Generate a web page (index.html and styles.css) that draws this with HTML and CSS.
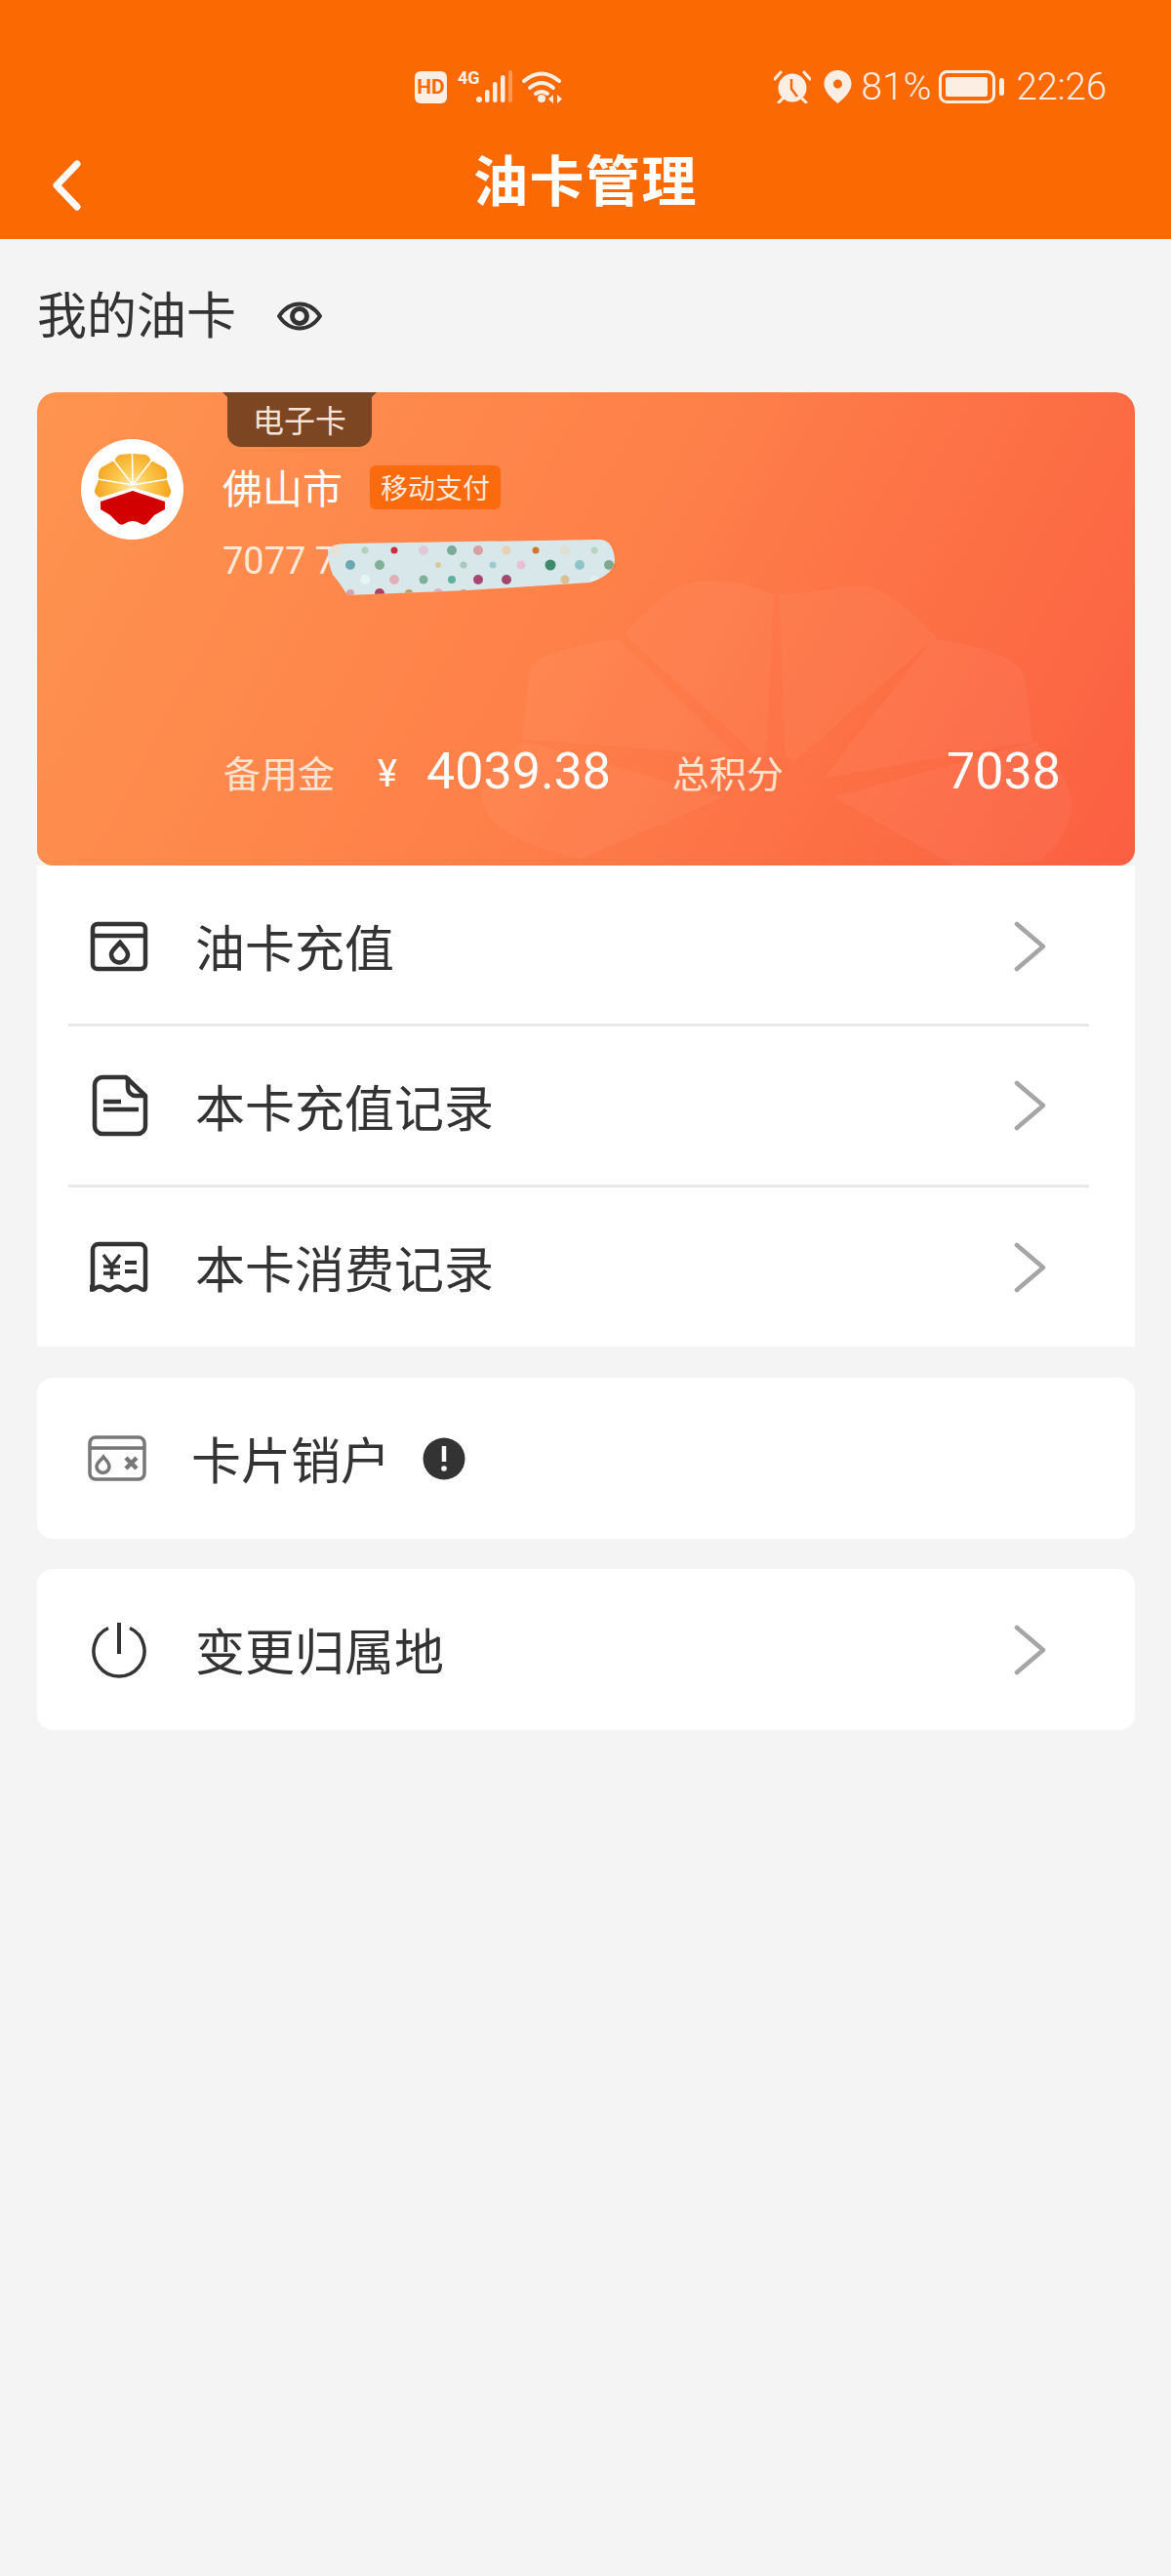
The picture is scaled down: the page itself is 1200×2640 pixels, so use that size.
FILE: index.html
```html
<!DOCTYPE html>
<html lang="zh-CN">
<head>
  <meta charset="UTF-8">
  <meta name="viewport" content="width=device-width, initial-scale=1.0">
  <title>油卡管理</title>
  <link rel="stylesheet" href="styles.css">
</head>
<body>
  <!-- 顶部 -->
  <header class="header">
    <div class="status-bar">
      <svg class="st-left" width="154" height="40" viewBox="0 -3 154 40">
        <rect x="0" y="1" width="33" height="33" rx="6" fill="#fdeee3"/>
        <text x="16.5" y="24" class="st-hd">HD</text>
        <text x="44" y="14" class="st-4g">4G</text>
        <g fill="#fdeee3">
          <circle cx="66" cy="30" r="3"/>
          <rect x="72" y="20" width="4.500" height="13" rx="2.200"/>
          <rect x="80" y="12" width="4.500" height="21" rx="2.200"/>
          <rect x="88" y="5" width="4.500" height="28" rx="2.200"/>
          <rect x="96" y="0" width="4" height="33" rx="2" opacity="0.35"/>
          <circle cx="130" cy="29" r="4"/>
          <path d="M142 25v9l-5-4.500zM146 25v9l5-4.500z"/>
        </g>
        <g fill="none" stroke="#fdeee3" stroke-width="4" stroke-linecap="round">
          <path d="M112 11q18-15 36 0"/>
          <path d="M118 18q12-10 24 0"/>
          <path d="M124 24q6-4 12 0"/>
        </g>
      </svg>
      <div class="st-right">
        <svg width="38" height="34" viewBox="0 0 38 34">
          <circle cx="19" cy="18" r="14.500" fill="#fdeee3"/>
          <path d="M18 9v10l6 8" fill="none" stroke="#fb6903" stroke-width="2.500"/>
          <path d="M1 9l6-7M37 9l-6-7M5 33l4-4M33 33l-4-4" stroke="#fdeee3" stroke-width="3" stroke-linecap="round"/>
        </svg>
        <svg class="st-pin" width="29" height="34" viewBox="0 0 29 34">
          <path fill-rule="evenodd" d="M14.5 0C6.5 0 .5 6 .5 14c0 8 8 15 14 20 6-5 14-12 14-20C28.500 6 22.500 0 14.500 0zm0 9.500a4.500 4.500 0 1 1 0 9 4.500 4.500 0 0 1 0-9z" fill="#fdeee3"/>
        </svg>
        <span class="st-text st-pct">81%</span>
        <svg class="st-batt" width="68" height="34" viewBox="0 0 68 34">
          <rect x="1.500" y="1.500" width="55" height="31" rx="7" fill="none" stroke="#fdeee3" stroke-width="3"/>
          <rect x="7" y="7" width="43" height="20" rx="2" fill="#fdeee3"/>
          <rect x="62" y="8" width="5" height="18" rx="2.500" fill="#fdeee3"/>
        </svg>
        <span class="st-text st-time">22:26</span>
      </div>
    </div>
    <div class="nav">
      <svg class="back" width="34" height="54" viewBox="0 0 34 54">
        <path d="M29 5L8 27l21 22" fill="none" stroke="#fff" stroke-width="7" stroke-linecap="round" stroke-linejoin="round"/>
      </svg>
      <h1 class="nav-title">油卡管理</h1>
    </div>
  </header>

  <!-- 我的油卡 -->
  <div class="section-head">
    <span class="section-title">我的油卡</span>
    <svg width="46" height="30" viewBox="0 0 46 30">
      <path d="M2 15C8 6 15 2.500 23 2.500S38 6 44 15C38 24 31 27.500 23 27.500S8 24 2 15z" fill="none" stroke="#333" stroke-width="4"/>
      <circle cx="23" cy="15" r="7.500" fill="none" stroke="#333" stroke-width="5"/>
    </svg>
  </div>

  <main class="content">
    <div class="oil-card">
      <!-- 水印 -->
      <svg class="watermark" width="1125" height="485" viewBox="38 402 1125 485">
        <g fill="#fff" opacity="0.04">
          <path d="M793 610Q750 590 710 597 680 605 640 650L774 773 785 775z"/>
          <path d="M798 610Q840 605 889 600 920 610 959 653L815 780 805 775z"/>
          <path d="M634 655Q590 660 557 673 540 680 541 700L535 757 755 775z"/>
          <path d="M956 655Q1000 660 1029 673 1050 685 1051 700L1058 760 844 797z"/>
          <path d="M493 817Q495 790 538 760L742 817 595 880Q500 860 493 817z"/>
          <path d="M854 817L1061 760Q1095 790 1099 827 1090 870 1061 883L978 887z"/>
        </g>
      </svg>
      <div class="card-tag">
        <span>电子卡</span>
      </div>

      <div class="card-top">
        <div class="logo">
          <svg width="105" height="103" viewBox="0 0 105 103">
            <defs>
              <radialGradient id="petal" gradientUnits="userSpaceOnUse" cx="53" cy="48" r="40">
                <stop offset="0" stop-color="#fdeab0"/>
                <stop offset="0.4" stop-color="#fdcb55"/>
                <stop offset="1" stop-color="#f5a31c"/>
              </radialGradient>
            </defs>
            <path d="M52 50L19 60Q13 56 14 52L18 42Q17 32 21 29L32 23 34 23Q36 17 40 16L51 15 54 15 66 16Q70 17 72 23L74 23 85 29Q89 32 88 42L92 52Q93 56 89 60L54 50z" fill="url(#petal)"/>
            <path d="M53 47L52.500 14M53 47L33 21M53 47L73 21M53 47L17 41M53 47L89 41" stroke="#fff" stroke-width="1.600"/>
            <path d="M53 53L20 64V72L30 78 37 85Q40 89 44 87 53 81 62 87 66 89 69 85L75 78 86 72V64z" fill="#d20000"/>
          </svg>
        </div>
        <div class="card-info">
          <div class="card-city">
            <span class="city-name">佛山市</span>
            <span class="pay-tag">移动支付</span>
          </div>
          <div class="card-no">7077 7</div>
        </div>
      </div>

      <!-- 卡号打码 -->
      <svg class="scribble" width="294" height="58" viewBox="0 0 294 58">
        <defs>
          <clipPath id="blob">
            <path d="M0 10Q5 4 20 4L278 0Q292 0 294 20 294 36 268 44L143 52 20 57Q12 44 5 36 0 24 0 10z"/>
          </clipPath>
        </defs>
        <g clip-path="url(#blob)">
          <rect width="294" height="58" fill="#d8e8ea"/>
          <circle cx="8" cy="11" r="5" fill="#e8e0d0"/>
          <circle cx="38" cy="11" r="3.500" fill="#b4d0bc"/>
          <circle cx="68" cy="11" r="3.500" fill="#c93040"/>
          <circle cx="98" cy="11" r="5" fill="#e0c8d4"/>
          <circle cx="127" cy="11" r="5" fill="#7aab98"/>
          <circle cx="154" cy="11" r="5" fill="#d8a0a0"/>
          <circle cx="183" cy="11" r="4.500" fill="#e8d0b0"/>
          <circle cx="213" cy="11" r="3.500" fill="#d07830"/>
          <circle cx="243" cy="11" r="5" fill="#e0e0d0"/>
          <circle cx="273" cy="11" r="3.500" fill="#b8d4c0"/>
          <circle cx="23" cy="26" r="5" fill="#6ca8b0"/>
          <circle cx="53" cy="26" r="5" fill="#80b098"/>
          <circle cx="83" cy="26" r="4" fill="#d8e8e4"/>
          <circle cx="113" cy="26" r="3" fill="#d8c8a0"/>
          <circle cx="139" cy="26" r="3.500" fill="#a8c8b8"/>
          <circle cx="169" cy="26" r="3.500" fill="#a0c8d0"/>
          <circle cx="198" cy="26" r="4.500" fill="#e8c0d0"/>
          <circle cx="228" cy="26" r="5.500" fill="#3f8a6c"/>
          <circle cx="258" cy="26" r="5" fill="#90c4c8"/>
          <circle cx="288" cy="26" r="5" fill="#80a890"/>
          <circle cx="38" cy="41" r="5" fill="#e8f4f4"/>
          <circle cx="68" cy="41" r="5" fill="#e0b0b8"/>
          <circle cx="98" cy="41" r="4.500" fill="#80b098"/>
          <circle cx="127" cy="41" r="4" fill="#60b0a0"/>
          <circle cx="154" cy="41" r="5" fill="#a84870"/>
          <circle cx="183" cy="41" r="5" fill="#a04870"/>
          <circle cx="243" cy="41" r="4.500" fill="#d8c090"/>
          <circle cx="273" cy="41" r="4.500" fill="#e0f0f0"/>
          <circle cx="23" cy="55" r="4" fill="#d8a0a8"/>
          <circle cx="53" cy="55" r="5" fill="#b04060"/>
          <circle cx="83" cy="55" r="4" fill="#c0a060"/>
          <circle cx="113" cy="55" r="5" fill="#e0b0c0"/>
          <circle cx="139" cy="55" r="4" fill="#c0a870"/>
        </g>
      </svg>

      <div class="card-stats">
        <span class="stat-label">备用金</span>
        <span class="stat-yen">¥</span>
        <span class="stat-value">4039.38</span>
        <span class="stat-label stat-label-2">总积分</span>
        <span class="stat-value stat-points">7038</span>
      </div>
    </div>

    <!-- 菜单 -->
    <div class="menu-main">
      <div class="row row-line row-first">
        <svg class="row-icon" width="60" height="60" viewBox="0 0 60 60">
          <rect x="3" y="7" width="54" height="46" rx="5" fill="none" stroke="#333" stroke-width="4.500"/>
          <path d="M3 19h54" stroke="#333" stroke-width="4.500"/>
          <path d="M31 26c4 5 8 8 8 12a8.500 8.500 0 0 1-17 0c0-4 5-7 9-12z" fill="none" stroke="#333" stroke-width="4.500"/>
        </svg>
        <span class="row-text">油卡充值</span>
        <svg class="chev" width="36" height="56" viewBox="0 0 36 56">
          <path d="M6 5l27 23L6 51" fill="none" stroke="#a5a5a5" stroke-width="4.500" stroke-linecap="round" stroke-linejoin="round"/>
        </svg>
      </div>
      <div class="row row-line">
        <svg class="row-icon" width="60" height="64" viewBox="0 0 60 64">
          <path d="M37 3H13a8 8 0 0 0-8 8v42a8 8 0 0 0 8 8h36a8 8 0 0 0 8-8V22z" fill="none" stroke="#333" stroke-width="4.500" stroke-linejoin="round"/>
          <path d="M39 3v11a8 8 0 0 0 8 8h10" fill="none" stroke="#333" stroke-width="4.500"/>
          <path d="M14 28h18M14 36h36" stroke="#333" stroke-width="4.500"/>
        </svg>
        <span class="row-text">本卡充值记录</span>
        <svg class="chev" width="36" height="56" viewBox="0 0 36 56">
          <path d="M6 5l27 23L6 51" fill="none" stroke="#a5a5a5" stroke-width="4.500" stroke-linecap="round" stroke-linejoin="round"/>
        </svg>
      </div>
      <div class="row row-last">
        <svg class="row-icon" width="60" height="60" viewBox="0 0 60 60">
          <path d="M3 50V12a6 6 0 0 1 6-6h42a6 6 0 0 1 6 6v38c0 4-4 3-6 1-3-2-6-2-9 0-3 3-6 3-9 0-3-2-6-2-9 0-3 3-6 3-9 0-3-2-6-2-9 0-2 2-6 3-6-1z" fill="none" stroke="#333" stroke-width="4.500" stroke-linejoin="round"/>
          <path d="M14 17l8.500 11 8.500-11M22.500 28v14M14 29h17M14 36h17" fill="none" stroke="#333" stroke-width="3.500"/>
          <path d="M36 25h12M36 34h12" fill="none" stroke="#333" stroke-width="4"/>
        </svg>
        <span class="row-text">本卡消费记录</span>
        <svg class="chev" width="36" height="56" viewBox="0 0 36 56">
          <path d="M6 5l27 23L6 51" fill="none" stroke="#a5a5a5" stroke-width="4.500" stroke-linecap="round" stroke-linejoin="round"/>
        </svg>
      </div>
    </div>

    <div class="menu-box">
      <div class="row">
        <svg class="row-icon icon-cancel" width="60" height="48" viewBox="0 0 60 48">
          <rect x="2" y="2" width="56" height="43" rx="6" fill="none" stroke="#777" stroke-width="3.500"/>
          <path d="M2 13h56" stroke="#777" stroke-width="3.500"/>
          <path d="M16 22c3 4 6 6 6 10a6.500 6.500 0 0 1-13 0c0-4 4-6 7-10z" fill="none" stroke="#777" stroke-width="3.500"/>
          <path d="M39 23l11 11M50 23L39 34" stroke="#777" stroke-width="4.500"/>
        </svg>
        <span class="row-text row-text-cancel">卡片销户</span>
        <svg class="alert" width="44" height="44" viewBox="0 0 44 44">
          <circle cx="22" cy="22" r="21.500" fill="#333"/>
          <path d="M22 9v16" stroke="#fff" stroke-width="4.500"/>
          <circle cx="22" cy="32" r="2.800" fill="#fff"/>
        </svg>
      </div>
    </div>

    <div class="menu-box">
      <div class="row">
        <svg class="row-icon" width="60" height="60" viewBox="0 0 60 60">
          <path d="M19 7.500a26 26 0 1 0 22 0" fill="none" stroke="#333" stroke-width="3.500"/>
          <path d="M30 2v32" stroke="#333" stroke-width="4"/>
        </svg>
        <span class="row-text">变更归属地</span>
        <svg class="chev" width="36" height="56" viewBox="0 0 36 56">
          <path d="M6 5l27 23L6 51" fill="none" stroke="#a5a5a5" stroke-width="4.500" stroke-linecap="round" stroke-linejoin="round"/>
        </svg>
      </div>
    </div>
  </main>
</body>
</html>
```

FILE: styles.css
```css
* {
  box-sizing: border-box;
}

body {
  margin: 0;
  min-height: 2640px;
  background: #f4f4f4;
  color: #333;
  font-family: "Noto Sans CJK SC", Roboto, sans-serif;
}

/* 顶部 */
.header {
  height: 245px;
  padding-top: 72px;
  background: #fb6903;
}

.status-bar {
  display: flex;
  justify-content: space-between;
  align-items: center;
  height: 34px;
  padding: 0 66px 0 425px;
}

.st-hd {
  font-family: Roboto, sans-serif;
  font-size: 21px;
  font-weight: 700;
  fill: #fb6903;
  text-anchor: middle;
}

.st-4g {
  font-family: Roboto, sans-serif;
  font-size: 18px;
  font-weight: 700;
  fill: #fdeee3;
}

.st-right {
  display: flex;
  align-items: center;
}

.st-pin {
  margin-left: 13px;
}

.st-text {
  font-family: Roboto, sans-serif;
  font-size: 38px;
  font-weight: 300;
  line-height: 34px;
  color: #fdeee3;
}

.st-pct {
  margin-left: 10px;
  font-size: 39px;
}

.st-batt {
  margin-left: 7px;
}

.st-time {
  margin-left: 12px;
}

.nav {
  display: grid;
  grid-template-columns: 1fr auto 1fr;
  align-items: center;
  height: 72px;
  margin-top: 40px;
  padding: 0 50px;
}

.back {
  display: block;
  margin-top: 16px;
}

.nav-title {
  margin: 0;
  font-size: 56px;
  font-weight: 700;
  line-height: 1;
  color: #fff;
  letter-spacing: 1.500px;
}

/* 我的油卡 */
.section-head {
  display: flex;
  align-items: center;
  height: 157px;
  padding-left: 38px;
  gap: 42px;
}

.section-title {
  padding-bottom: 6px;
  font-size: 51px;
  line-height: 1;
}

.content {
  padding: 0 37px 0 38px;
}

/* 卡片 */
.oil-card {
  position: relative;
  display: flex;
  flex-direction: column;
  height: 485px;
  border-radius: 20px 20px 16px 16px;
  overflow: hidden;
  background: linear-gradient(118deg, #fe9450 0%, #fe8049 50%, #fb5f42 100%);
}

.watermark {
  position: absolute;
  left: 0;
  top: 0;
}

.card-tag {
  position: absolute;
  left: 195px;
  top: 0;
  display: flex;
  justify-content: center;
  align-items: center;
  width: 148px;
  height: 56px;
  padding-bottom: 3px;
  background: #7d4622;
  border-radius: 0 0 14px 14px;
  color: #f6e4d8;
  font-size: 32px;
  line-height: 1;
}

.card-tag::before,
.card-tag::after {
  content: "";
  position: absolute;
  top: 0;
  width: 6px;
  height: 6px;
  background: #7d4622;
}

.card-tag::before {
  left: -5px;
  clip-path: polygon(0 0, 100% 0, 100% 100%);
}

.card-tag::after {
  right: -5px;
  clip-path: polygon(0 0, 100% 0, 0 100%);
}

.card-top {
  position: relative;
  display: flex;
  padding: 48px 0 0 45px;
}

.logo {
  width: 105px;
  height: 103px;
  flex-shrink: 0;
  border-radius: 50%;
  background: #fff;
}

.logo svg {
  display: block;
}

.card-info {
  margin-left: 40px;
  padding-top: 27px;
}

.card-city {
  display: flex;
  align-items: center;
  height: 45px;
}

.city-name {
  padding-bottom: 3px;
  font-size: 41px;
  line-height: 1;
  color: #fff;
}

.pay-tag {
  display: flex;
  align-items: center;
  justify-content: center;
  width: 134px;
  height: 45px;
  margin-left: 28px;
  padding-bottom: 2px;
  background: #fb6a0c;
  border-radius: 6px;
  color: #fdeadf;
  font-size: 28px;
  line-height: 1;
}

.card-no {
  margin-top: 33px;
  font-family: Roboto, sans-serif;
  font-size: 38px;
  line-height: 40px;
  color: #ffe8d8;
}

.scribble {
  position: absolute;
  left: 298px;
  top: 151px;
}

.card-stats {
  position: relative;
  display: flex;
  align-items: center;
  margin-top: auto;
  margin-right: 76px;
  padding: 0 0 70px 191px;
}

.stat-label {
  font-size: 38px;
  line-height: 1;
  color: #fde2cf;
}

.stat-label-2 {
  margin-left: 63px;
}

.stat-yen {
  margin-left: 44px;
  padding-top: 4px;
  font-family: Roboto, sans-serif;
  font-size: 38px;
  line-height: 1;
  color: #fff;
}

.stat-value {
  margin-left: 30px;
  font-family: Roboto, sans-serif;
  font-size: 52px;
  line-height: 1;
  color: #fff;
}

.stat-points {
  margin-left: auto;
}

/* 菜单 */
.menu-main {
  padding: 0 47px 0 32px;
  background: #fff;
  margin-bottom: 32px;
}

.menu-box {
  padding: 0 47px 0 32px;
  background: #fff;
  border-radius: 16px;
  margin-bottom: 31px;
}

.row {
  display: flex;
  align-items: center;
  height: 165px;
}

.row-line {
  border-bottom: 3px solid #e8e8e8;
}

.row-first {
  padding-top: 3px;
}

.row-last {
  height: 163px;
}

.row-icon {
  flex-shrink: 0;
  margin-left: 22px;
}

.icon-cancel {
  margin-left: 20px;
  margin-right: 2px;
}

.row-text {
  margin-left: 48px;
  font-size: 51px;
  line-height: 1;
  color: #333;
}

.row-text-cancel {
  margin-left: 44px;
}

.alert {
  margin-left: 33px;
}

.chev {
  margin-left: auto;
  margin-right: 44px;
}
```
